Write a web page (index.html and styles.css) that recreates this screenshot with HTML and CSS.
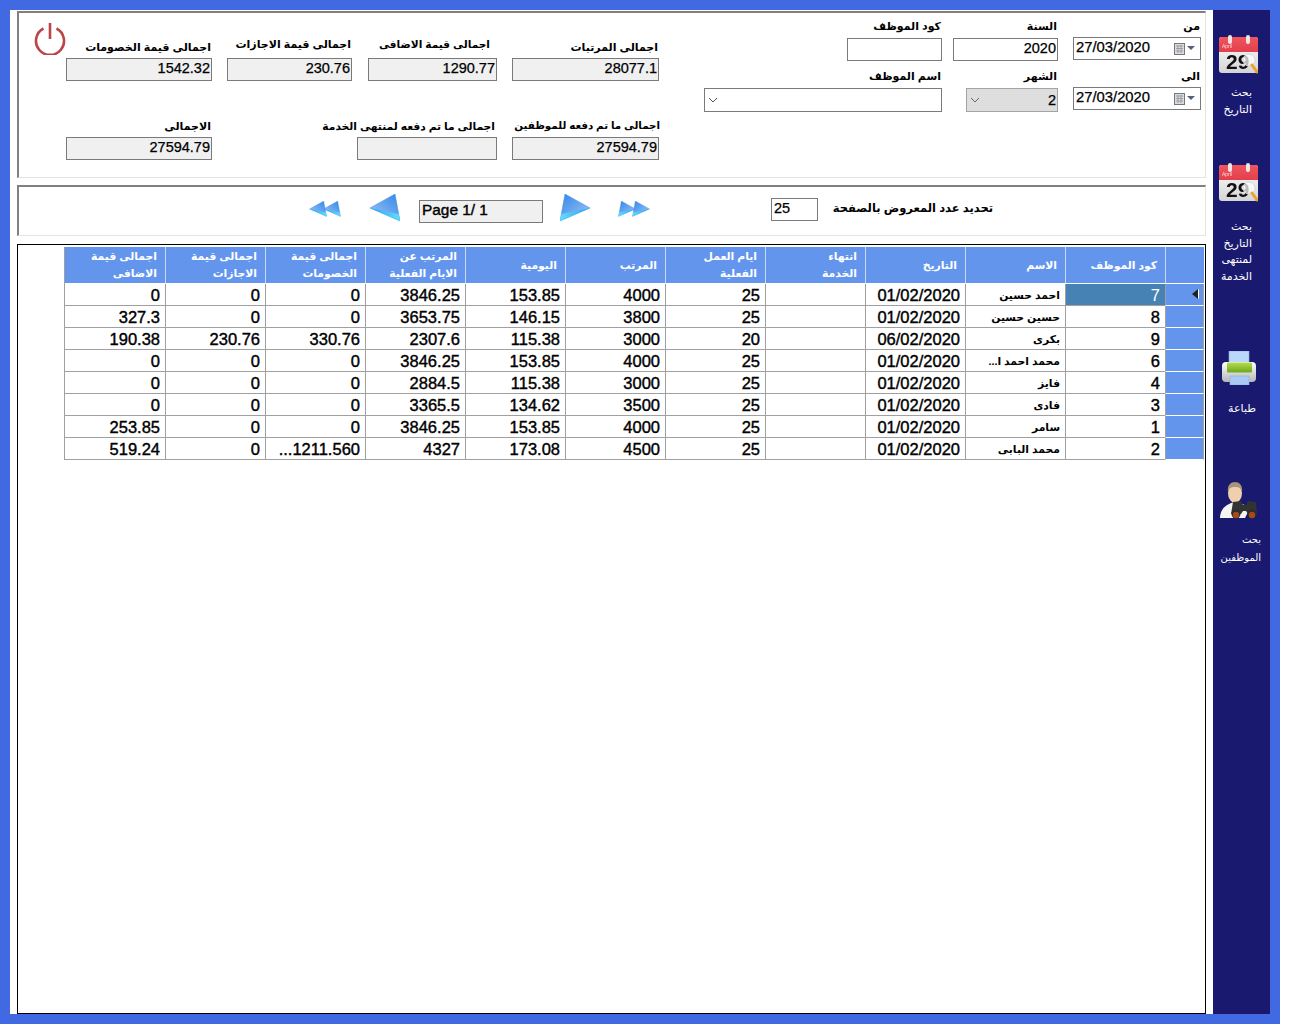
FILE: index.html
```html
<!DOCTYPE html>
<html lang="ar">
<head>
    <meta charset="UTF-8">
    <title>Payroll Report</title>
    <link rel="stylesheet" href="styles.css">
</head>
<body>
    <svg class="defs" xmlns="http://www.w3.org/2000/svg">
        <defs>
            <linearGradient id="calBody" x1="0" y1="0" x2="0" y2="1"><stop offset="0" stop-color="#ffffff"/><stop offset="1" stop-color="#d4d4d4"/></linearGradient>
            <linearGradient id="calRed" x1="0" y1="0" x2="0" y2="1"><stop offset="0" stop-color="#f0555c"/><stop offset="1" stop-color="#e2404c"/></linearGradient>
            <linearGradient id="triFace" x1="0" y1="0" x2="1" y2="1"><stop offset="0" stop-color="#2f86ea"/><stop offset="1" stop-color="#a6c8f4"/></linearGradient>
            <linearGradient id="triEdge" x1="0" y1="0" x2="1" y2="0"><stop offset="0" stop-color="#5fdcff"/><stop offset="1" stop-color="#2aa4ee"/></linearGradient>
            <symbol id="calendar" viewBox="0 0 39 39">
                <rect x="0" y="2" width="39" height="36" rx="3" fill="url(#calBody)"/>
                <path d="M0 17V5a3 3 0 0 1 3-3h33a3 3 0 0 1 3 3v12z" fill="url(#calRed)"/>
                <rect x="9" y="0" width="4" height="9" rx="2" fill="#efe6e6"/>
                <rect x="27" y="0" width="4" height="9" rx="2" fill="#efe6e6"/>
                <text x="3" y="13" font-family="Liberation Sans" font-size="5" fill="#ffd8d8">April</text>
                <text x="7" y="34" font-family="Liberation Sans" font-size="21" font-weight="bold" fill="#111">29</text>
                <circle cx="30" cy="25" r="6" fill="#ffffff" fill-opacity="0.72" stroke="#d8d8d8"/>
                <line x1="33" y1="30" x2="38" y2="37" stroke="#e8a52c" stroke-width="3" stroke-linecap="round"/>
            </symbol>
            <symbol id="tri" viewBox="0 0 30 28">
                <path d="M5 0L30 14L0 27z" fill="url(#triFace)" stroke="#3f8fe4" stroke-width="0.5"/>
                <path d="M1.5 20L30 14L0 27z" fill="url(#triEdge)"/>
            </symbol>
        </defs>
    </svg>

    <div class="frame">
        <div class="content">
            <div class="panel top-panel">
                <svg class="power" viewBox="0 0 32 32">
                    <path d="M9.5 5.5a14 14 0 1 0 13 0" fill="none" stroke="#bd4447" stroke-width="2.6"/>
                    <line x1="16" y1="0" x2="16" y2="16" stroke="#bd4447" stroke-width="2.6"/>
                </svg>

                <div class="summary">
                    <div class="row">
                        <div class="field w146"><label>اجمالى قيمة الخصومات</label><input class="box ro" value="1542.32" readonly></div>
                        <div class="field w125"><label class="up">اجمالى قيمة الاجازات</label><input class="box ro" value="230.76" readonly></div>
                        <div class="field w129 shift"><label class="up inset">اجمالى قيمة الاضافى</label><input class="box ro" value="1290.77" readonly></div>
                        <div class="field w147"><label>اجمالى المرتبات</label><input class="box ro" value="28077.1" readonly></div>
                    </div>
                    <div class="row row2">
                        <div class="field w146"><label>الاجمالى</label><input class="box ro" value="27594.79" readonly></div>
                        <div class="field w140 push"><label class="mid">اجمالى ما تم دفعه لمنتهى الخدمة</label><input class="box ro" readonly></div>
                        <div class="field w147"><label class="tight">اجمالى ما تم دفعه للموظفين</label><input class="box ro" value="27594.79" readonly></div>
                    </div>
                </div>

                <div class="filters">
                    <div class="row">
                        <div class="field w95"><label>كود الموظف</label><input class="box" readonly></div>
                        <div class="field w105 gap11"><label>السنة</label><input class="box" value="2020" readonly></div>
                        <div class="field w128"><label>من</label>
                            <div class="date"><span>27/03/2020</span><svg viewBox="0 0 21 12" class="date-ico"><rect x="0.5" y="0.5" width="10" height="11" fill="#d8dce0" stroke="#777"/><path d="M2 3h7M2 5.500h7M2 8h7M4 2v8M7 2v8" stroke="#8a8a8a" stroke-width="0.7"/><path d="M13 3h8l-4 4z" fill="#556080"/></svg></div>
                        </div>
                    </div>
                    <div class="row row-b">
                        <div class="field w238"><label>اسم الموظف</label><div class="combo"><svg class="chev" viewBox="0 0 10 6"><path d="M1 1l4 4 4-4" fill="none" stroke="#555"/></svg></div></div>
                        <div class="field w92 gap24"><label>الشهر</label><div class="combo off"><svg class="chev" viewBox="0 0 10 6"><path d="M1 1l4 4 4-4" fill="none" stroke="#666"/></svg><span>2</span></div></div>
                        <div class="field w128"><label>الى</label>
                            <div class="date"><span>27/03/2020</span><svg viewBox="0 0 21 12" class="date-ico"><rect x="0.5" y="0.5" width="10" height="11" fill="#d8dce0" stroke="#777"/><path d="M2 3h7M2 5.500h7M2 8h7M4 2v8M7 2v8" stroke="#8a8a8a" stroke-width="0.7"/><path d="M13 3h8l-4 4z" fill="#556080"/></svg></div>
                        </div>
                    </div>
                </div>
            </div>

            <div class="panel nav-panel">
                <svg class="dbl flip" viewBox="0 0 32 17"><use href="#tri" x="0" y="1" width="18" height="16"/><use href="#tri" x="14" y="1" width="18" height="16"/></svg>
                <svg class="single flip" viewBox="0 0 30 28"><use href="#tri"/></svg>
                <input class="box ro page-box" value="Page 1/ 1" readonly>
                <svg class="single" viewBox="0 0 30 28"><use href="#tri"/></svg>
                <svg class="dbl" viewBox="0 0 32 17"><use href="#tri" x="0" y="1" width="18" height="16"/><use href="#tri" x="14" y="1" width="18" height="16"/></svg>
                <input class="box per-page" value="25" readonly>
                <label class="per-label">تحديد عدد المعروض بالصفحة</label>
            </div>

            <div class="grid-panel">
                <table class="grid" dir="rtl">
                    <thead>
                        <tr>
                            <th class="rh"></th>
                            <th>كود الموظف</th>
                            <th>الاسم</th>
                            <th>التاريخ</th>
                            <th>انتهاء<br>الخدمة</th>
                            <th>ايام العمل<br>الفعلية</th>
                            <th>المرتب</th>
                            <th>اليومية</th>
                            <th>المرتب عن<br>الايام الفعلية</th>
                            <th>اجمالى قيمة<br>الخصومات</th>
                            <th>اجمالى قيمة<br>الاجازات</th>
                            <th>اجمالى قيمة<br>الاضافى</th>
                        </tr>
                    </thead>
                    <tbody>
                        <tr><td class="rh"><span class="arrow"></span></td><td class="sel">7</td><td class="name">احمد حسين</td><td>01/02/2020</td><td></td><td>25</td><td>4000</td><td>153.85</td><td>3846.25</td><td>0</td><td>0</td><td>0</td></tr>
                        <tr><td class="rh"></td><td>8</td><td class="name">حسين حسين</td><td>01/02/2020</td><td></td><td>25</td><td>3800</td><td>146.15</td><td>3653.75</td><td>0</td><td>0</td><td>327.3</td></tr>
                        <tr><td class="rh"></td><td>9</td><td class="name">بكرى</td><td>06/02/2020</td><td></td><td>20</td><td>3000</td><td>115.38</td><td>2307.6</td><td>330.76</td><td>230.76</td><td>190.38</td></tr>
                        <tr><td class="rh"></td><td>6</td><td class="name">محمد احمد ا...</td><td>01/02/2020</td><td></td><td>25</td><td>4000</td><td>153.85</td><td>3846.25</td><td>0</td><td>0</td><td>0</td></tr>
                        <tr><td class="rh"></td><td>4</td><td class="name">فايز</td><td>01/02/2020</td><td></td><td>25</td><td>3000</td><td>115.38</td><td>2884.5</td><td>0</td><td>0</td><td>0</td></tr>
                        <tr><td class="rh"></td><td>3</td><td class="name">فادى</td><td>01/02/2020</td><td></td><td>25</td><td>3500</td><td>134.62</td><td>3365.5</td><td>0</td><td>0</td><td>0</td></tr>
                        <tr><td class="rh"></td><td>1</td><td class="name">سامر</td><td>01/02/2020</td><td></td><td>25</td><td>4000</td><td>153.85</td><td>3846.25</td><td>0</td><td>0</td><td>253.85</td></tr>
                        <tr><td class="rh"></td><td>2</td><td class="name">محمد البابى</td><td>01/02/2020</td><td></td><td>25</td><td>4500</td><td>173.08</td><td>4327</td><td>1211.560...</td><td>0</td><td>519.24</td></tr>
                    </tbody>
                </table>
            </div>
        </div>

        <div class="sidebar">
            <div class="side-item item-date">
                <svg class="side-ico"><use href="#calendar"/></svg>
                <p class="cap cap-date">بحث<br>التاريخ</p>
            </div>
            <div class="side-item item-end">
                <svg class="side-ico"><use href="#calendar"/></svg>
                <p class="cap cap-end">بحث<br>التاريخ<br>لمنتهى<br>الخدمة</p>
            </div>
            <div class="side-item item-print">
                <svg class="printer" viewBox="0 0 34 34">
                    <defs>
                        <linearGradient id="prBody" x1="0" y1="0" x2="0" y2="1"><stop offset="0" stop-color="#ffffff"/><stop offset="1" stop-color="#b4b8b8"/></linearGradient>
                        <linearGradient id="prGreen" x1="0" y1="0" x2="0" y2="1"><stop offset="0" stop-color="#b4dc50"/><stop offset="1" stop-color="#6ea81c"/></linearGradient>
                    </defs>
                    <rect x="7" y="0" width="20" height="15" fill="#b9d8fa" stroke="#8fb0d8" stroke-width="0.6"/>
                    <rect x="0" y="11" width="34" height="20" rx="4" fill="url(#prBody)"/>
                    <rect x="5" y="11.500" width="25" height="10" rx="1" fill="url(#prGreen)"/>
                    <rect x="8" y="25" width="19" height="9" fill="#a9c9f2" stroke="#8fb0d8" stroke-width="0.6"/>
                </svg>
                <p class="cap cap-print">طباعة</p>
            </div>
            <div class="side-item item-emp">
                <svg class="side-ico" viewBox="0 0 39 39">
                    <path d="M1 36c0-9 6-14 15-16 6 1 12 3 14 8l-4 8z" fill="#f4f4f2"/>
                    <ellipse cx="16" cy="11" rx="7" ry="10" fill="#efcfae"/>
                    <path d="M9 10c-1-7 3-10 7-10s8 3 7 10c-1-4-3-5-7-5s-6 1-7 5z" fill="#a89478"/>
                    <path d="M14 20l8-1 2 4h3l2-4 8 1 1 12H29l-2-3h-3l-2 3H12z" fill="#333333"/>
                    <circle cx="17" cy="32" r="4.500" fill="#2b2b2b"/>
                    <circle cx="33" cy="32" r="4.500" fill="#2b2b2b"/>
                    <circle cx="17" cy="33" r="3.200" fill="#a5481c"/>
                    <circle cx="33" cy="33" r="3.200" fill="#a5481c"/>
                </svg>
                <p class="cap cap-emp">بحث<br>الموظفين</p>
            </div>
        </div>
    </div>
</body>
</html>
```

FILE: styles.css
```css
* {
    box-sizing: border-box;
}

html, body {
    margin: 0;
    padding: 0;
    background: #ffffff;
    overflow: hidden;
    font-family: "Liberation Sans", "DejaVu Sans", sans-serif;
}

.defs {
    position: absolute;
    width: 0;
    height: 0;
}

.frame {
    display: flex;
    width: 1280px;
    height: 1024px;
    padding: 10px;
    background: #4169e1;
}

.content {
    width: 1203px;
    padding: 1px 7px 0 7px;
    background: #ffffff;
    display: flex;
    flex-direction: column;
}

/* group boxes */
.panel {
    display: flex;
    width: 1189px;
    border-top: 2px solid #808080;
    border-left: 2px solid #808080;
    border-right: 1px solid #e4e4e4;
    border-bottom: 1px solid #e4e4e4;
}

.top-panel {
    height: 167px;
}

.power {
    width: 32px;
    height: 32px;
    margin: 10px 0 0 15px;
    flex: none;
}

.summary {
    width: 593px;
    margin-top: 27px;
    flex: none;
}

.filters {
    width: 497px;
    margin-top: 7px;
    margin-left: 45px;
    flex: none;
}

.row {
    display: flex;
    justify-content: flex-end;
    gap: 15px;
}

.row2 {
    margin-top: 38px;
}

.row-b {
    margin-top: 9px;
}

.field {
    display: flex;
    flex-direction: column;
    align-items: flex-end;
    flex: none;
}

.field label, .per-label {
    display: block;
    height: 18px;
    line-height: 14px;
    font-size: 11px;
    font-weight: bold;
    color: #000;
    white-space: nowrap;
    padding-right: 1px;
}

.filters .field label {
    line-height: 12px;
}

.field label.up {
    position: relative;
    top: -3px;
}

.field label.inset {
    padding-right: 7px;
    font-size: 10.6px;
}

.field label.mid {
    font-size: 10.7px;
    padding-right: 2px;
}

.field label.tight {
    font-size: 10.3px;
    padding-right: 0;
    margin-right: -1px;
}

.w92 { width: 92px; }
.w95 { width: 95px; }
.w105 { width: 105px; }
.w125 { width: 125px; }
.w128 { width: 128px; }
.w129 { width: 129px; }
.w140 { width: 140px; }
.w146 { width: 146px; }
.w147 { width: 147px; }
.w238 { width: 238px; }

.push { margin-left: 130px; }
.shift { margin-left: 1px; }
.gap11 { margin-left: -4px; }
.gap24 { margin-left: 9px; }

.box {
    display: block;
    width: 100%;
    height: 23px;
    padding: 0 1px 3px 3px;
    border: 1px solid #7a7a7a;
    border-radius: 0;
    outline: none;
    background: #ffffff;
    color: #000;
    text-align: right;
    font-family: "Liberation Sans", sans-serif;
    font-size: 14.5px;
    -webkit-text-stroke: 0.25px #000;
}

.ro {
    background: #f0f0f0;
}

.date {
    display: flex;
    align-items: center;
    justify-content: space-between;
    width: 100%;
    height: 23px;
    margin-top: -1px;
    padding: 0 5px 3px 2px;
    border: 1px solid #7a7a7a;
    font-size: 14.8px;
    -webkit-text-stroke: 0.25px #000;
}

.date-ico {
    width: 21px;
    height: 12px;
    margin-top: 3px;
}

.combo {
    display: flex;
    align-items: center;
    justify-content: space-between;
    width: 100%;
    height: 24px;
    padding: 0 1px 0 3px;
    border: 1px solid #7a7a7a;
    background: #ffffff;
    font-size: 14.5px;
    -webkit-text-stroke: 0.25px #000;
}

.combo.off {
    background: #dedede;
    border-color: #a4a4a4;
}

.chev {
    width: 10px;
    height: 6px;
}

/* paging bar */
.nav-panel {
    height: 51px;
    margin-top: 7px;
    align-items: center;
    padding-bottom: 3px;
}

.dbl {
    width: 32px;
    height: 17px;
    margin-left: 28px;
    margin-top: -3px;
    flex: none;
}

.dbl.flip {
    margin-left: 290px;
}

.flip {
    transform: scaleX(-1);
}

.single {
    width: 30px;
    height: 28px;
    margin-left: 29px;
    margin-top: -4px;
    flex: none;
}

.page-box {
    width: 124px;
    margin-left: 19px;
    text-align: left;
    font-size: 15.4px;
    margin-top: 4px;
    padding-left: 2px;
    -webkit-text-stroke: 0.4px #000;
}

.page-box + .single {
    margin-left: 17px;
}

.per-page {
    width: 47px;
    margin-left: 121px;
    text-align: left;
    padding-left: 2px;
}

.per-label {
    width: 162px;
    margin-left: 13px;
    padding: 0;
    font-size: 11.5px;
    text-align: right;
}

/* data grid */
.grid-panel {
    width: 1189px;
    height: 770px;
    margin-top: 8px;
    padding: 2px 0 0 46px;
    border: 1px solid #000;
}

.grid {
    width: 1140px;
    table-layout: fixed;
    border-collapse: separate;
    border-spacing: 0;
    border-left: 1px solid #a0a0a0;
}

.grid th {
    width: 100px;
    height: 37px;
    padding: 0 8px 0 2px;
    background: #6495ed;
    color: #ffffff;
    font-size: 10.8px;
    font-weight: bold;
    line-height: 17px;
    text-align: right;
    vertical-align: middle;
    border-left: 1px solid #c9d9f3;
    border-bottom: 1px solid #ffffff;
}

.grid th:last-child {
    border-left: 0;
}

.grid th.rh {
    width: 39px;
}

.grid td {
    height: 22px;
    padding: 1px 5px 0 2px;
    background: #ffffff;
    color: #000;
    font-size: 16.5px;
    -webkit-text-stroke: 0.4px #000;
    text-align: right;
    white-space: nowrap;
    overflow: hidden;
    border-left: 1px solid #a0a0a0;
    border-bottom: 1px solid #a0a0a0;
}

.grid td:last-child {
    border-left: 0;
}

.grid td.name {
    padding-right: 5px;
    font-size: 10.8px;
    font-weight: bold;
    -webkit-text-stroke: 0;
}

.grid td.sel {
    background: #4682b4;
    color: #ffffff;
    -webkit-text-stroke: 0;
}

.grid td.rh {
    position: relative;
    background: #6495ed;
    border-left: 1px solid #a0a0a0;
    border-right: 1px solid #a0a0a0;
    border-bottom: 1px solid #ffffff;
}

.arrow {
    position: absolute;
    left: 26px;
    top: 5px;
    width: 0;
    height: 0;
    border-top: 5px solid transparent;
    border-bottom: 5px solid transparent;
    border-right: 6px solid #222;
    filter: drop-shadow(1px 0 0 #fff);
}

/* right hand menu */
.sidebar {
    width: 57px;
    background: #191970;
    flex: none;
}

.side-item {
    display: flex;
    flex-direction: column;
    align-items: flex-start;
}

.item-date { height: 128px; padding-top: 25px; }
.item-end { height: 188px; padding-top: 25px; }
.item-print { height: 131px; padding-top: 25px; }
.item-emp { padding-top: 25px; }

.side-ico {
    width: 39px;
    height: 39px;
    margin-left: 6px;
    filter: blur(0.3px);
}

.printer {
    width: 34px;
    height: 34px;
    margin-left: 9px;
    filter: blur(0.3px);
}

.cap {
    margin: 0;
    color: #ffffff;
    font-size: 11px;
    line-height: 17px;
    text-align: right;
    white-space: nowrap;
}

.cap-date { width: 39px; margin-top: 10px; }
.cap-end { width: 39px; margin-top: 16px; line-height: 16.5px; }
.cap-print { width: 43px; margin-top: 15px; }
.cap-emp { width: 48px; margin-top: 10px; line-height: 18px; font-size: 10px; }
```
